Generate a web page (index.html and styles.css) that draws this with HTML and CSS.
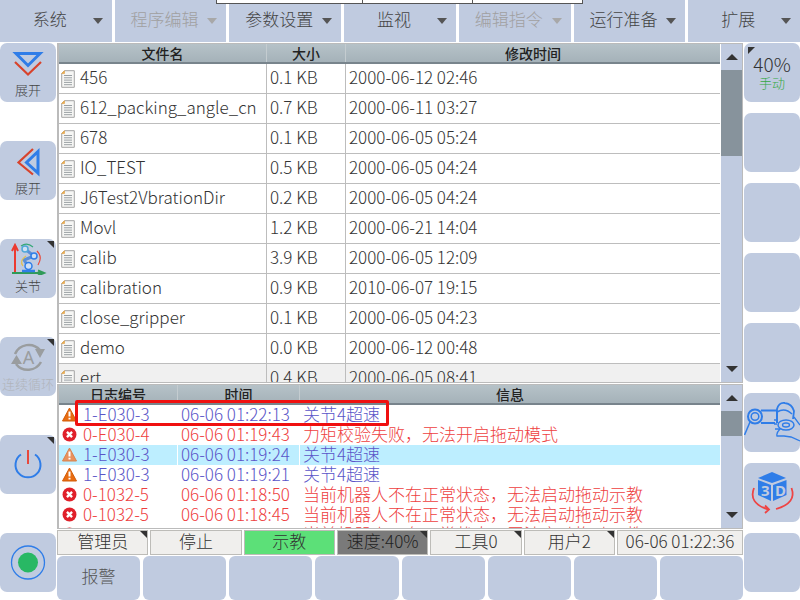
FILE: index.html
```html
<!DOCTYPE html>
<html lang="zh">
<head>
<meta charset="utf-8">
<title>Robot teach pendant</title>
<link rel="stylesheet" href="styles.css">
</head>
<body>
<svg class="defs" width="0" height="0">
  <symbol id="doc" viewBox="0 0 14 18">
    <path d="M3.500 .7H13.300V17.300H.7V3.500Z" fill="#f6f6f4" stroke="#a4a4a4"/>
    <path d="M.7 3.500 3.500 .7V3.500Z" fill="#f0b050" stroke="#e0a040" stroke-width=".6"/>
    <path d="M3 5.500H11M3 7.800H11M3 10.100H11M3 12.400H11M3 14.700H11" stroke="#9aa0a4" stroke-width="1"/>
  </symbol>
  <symbol id="warn" viewBox="0 0 15 15">
    <path d="M7.500 1 14.500 14H.5Z" fill="#e86c10" stroke="#d25c08" stroke-linejoin="round"/>
    <path d="M7.500 4.500V9.600M7.500 10.800V12.600" stroke="#fff" stroke-width="2"/>
  </symbol>
  <symbol id="warn-sel" viewBox="0 0 15 15">
    <path d="M7.500 1 14.500 14H.5Z" fill="#e8915c" stroke="#d9834e" stroke-linejoin="round"/>
    <path d="M7.500 4.500V9.600M7.500 10.800V12.600" stroke="#fff" stroke-width="2"/>
  </symbol>
  <symbol id="err" viewBox="0 0 14 14">
    <circle cx="7" cy="7" r="6.500" fill="#e0202a"/>
    <path d="M4.600 4.600 9.400 9.400M9.400 4.600 4.600 9.400" stroke="#fff" stroke-width="2.200"/>
  </symbol>
</svg>

<div class="app">
  <nav class="menubar">
    <div class="menu"><span>系统</span><i class="caret"></i></div>
    <div class="menu off"><span>程序编辑</span><i class="caret"></i></div>
    <div class="menu"><span>参数设置</span><i class="caret"></i></div>
    <div class="menu"><span>监视</span><i class="caret"></i></div>
    <div class="menu off"><span>编辑指令</span><i class="caret"></i></div>
    <div class="menu"><span>运行准备</span><i class="caret"></i></div>
    <div class="menu"><span>扩展</span><i class="caret"></i></div>
  </nav>

  <div class="main">
    <aside class="side side-left">
      <div class="tool">
        <svg class="ico" viewBox="0 0 56 36"><path d="M16 10.500H40L28 22.500Z" fill="none" stroke="#2f7de8" stroke-width="3"/><path d="M15 19 28 31.500 41 19" fill="none" stroke="#d8432c" stroke-width="2.200"/></svg>
        <span class="tool-label">展开</span>
      </div>
      <div class="tool">
        <svg class="ico" viewBox="0 0 56 36"><path d="M38 10.500V32L26.500 21.500Z" fill="none" stroke="#2f7de8" stroke-width="3"/><path d="M33 8 18.500 21.500 33 33.500" fill="none" stroke="#d8432c" stroke-width="2.200"/></svg>
        <span class="tool-label">展开</span>
      </div>
      <div class="tool mark-tr">
        <svg class="ico" viewBox="0 0 56 36">
          <path d="M15 34V7M12 12 15 6 18 12" fill="none" stroke="#ec3a30" stroke-width="2"/>
          <path d="M12 34H42M38 31.500 44 34 38 36.500" fill="none" stroke="#2f9a58" stroke-width="2"/>
          <path d="M22 32H35" stroke="#2f7de8" stroke-width="2.500"/>
          <path d="M28 27 24 21 34 17 25 10" fill="none" stroke="#5b8fd8" stroke-width="3"/>
          <circle cx="28.500" cy="27" r="3.500" fill="#cfe0f5" stroke="#2f7de8" stroke-width="1.500"/>
          <circle cx="34" cy="17" r="3" fill="#cfe0f5" stroke="#2f7de8" stroke-width="1.500"/>
          <circle cx="25" cy="10" r="3" fill="#cfe0f5" stroke="#4fa8d8" stroke-width="1.500"/>
          <path d="M21 7Q27 3 33 8" fill="none" stroke="#35a878" stroke-width="1.200"/>
          <path d="M37 12Q43 18 38 26" fill="none" stroke="#e84a3c" stroke-width="1.200"/>
          <path d="M23 27Q19 22 26 17" fill="none" stroke="#e0c050" stroke-width="1.200"/>
        </svg>
        <span class="tool-label">关节</span>
      </div>
      <div class="tool mark-tr off">
        <svg class="ico" viewBox="0 0 56 36">
          <path d="M15 17A15 15 0 0 1 40 13M41 25A15 15 0 0 1 16 27" fill="none" stroke="#9a9d9f" stroke-width="2.500"/>
          <path d="M35 12H45L40 21ZM11 27H22L16.500 18Z" fill="#9a9d9f"/>
          <text class="loop-a" x="28.500" y="27" text-anchor="middle">A</text>
        </svg>
        <span class="tool-label tool-label-wide">连续循环</span>
      </div>
      <div class="tool tool-center mark-tr">
        <svg class="ico-full" viewBox="0 0 56 59"><path d="M21 19.500A12.500 12.500 0 1 0 35 19.500" fill="none" stroke="#2f7de8" stroke-width="2"/><path d="M28 15V29" stroke="#e8483c" stroke-width="2"/></svg>
      </div>
      <div class="tool tool-center">
        <svg class="ico-full" viewBox="0 0 56 59"><circle cx="28" cy="29.500" r="16.500" fill="none" stroke="#2f7de8" stroke-width="1.300"/><circle cx="28" cy="29.500" r="10" fill="#28b864"/></svg>
      </div>
    </aside>

    <section class="center">
      <div class="panel file-panel">
        <div class="table">
          <div class="thead file-cols">
            <div class="th">文件名</div><div class="th">大小</div><div class="th">修改时间</div>
          </div>
          <div class="file-row file-cols"><div class="td"><svg class="doc"><use href="#doc"/></svg>456</div><div class="td">0.1 KB</div><div class="td">2000-06-12 02:46</div></div>
          <div class="file-row file-cols"><div class="td"><svg class="doc"><use href="#doc"/></svg>612_packing_angle_cn</div><div class="td">0.7 KB</div><div class="td">2000-06-11 03:27</div></div>
          <div class="file-row file-cols"><div class="td"><svg class="doc"><use href="#doc"/></svg>678</div><div class="td">0.1 KB</div><div class="td">2000-06-05 05:24</div></div>
          <div class="file-row file-cols"><div class="td"><svg class="doc"><use href="#doc"/></svg>IO_TEST</div><div class="td">0.5 KB</div><div class="td">2000-06-05 04:24</div></div>
          <div class="file-row file-cols"><div class="td"><svg class="doc"><use href="#doc"/></svg>J6Test2VbrationDir</div><div class="td">0.2 KB</div><div class="td">2000-06-05 04:24</div></div>
          <div class="file-row file-cols"><div class="td"><svg class="doc"><use href="#doc"/></svg>Movl</div><div class="td">1.2 KB</div><div class="td">2000-06-21 14:04</div></div>
          <div class="file-row file-cols"><div class="td"><svg class="doc"><use href="#doc"/></svg>calib</div><div class="td">3.9 KB</div><div class="td">2000-06-05 12:09</div></div>
          <div class="file-row file-cols"><div class="td"><svg class="doc"><use href="#doc"/></svg>calibration</div><div class="td">0.9 KB</div><div class="td">2010-06-07 19:15</div></div>
          <div class="file-row file-cols"><div class="td"><svg class="doc"><use href="#doc"/></svg>close_gripper</div><div class="td">0.1 KB</div><div class="td">2000-06-05 04:23</div></div>
          <div class="file-row file-cols"><div class="td"><svg class="doc"><use href="#doc"/></svg>demo</div><div class="td">0.0 KB</div><div class="td">2000-06-12 00:48</div></div>
          <div class="file-row file-cols file-row-alt"><div class="td"><svg class="doc"><use href="#doc"/></svg>ert</div><div class="td">0.4 KB</div><div class="td">2000-06-05 08:41</div></div>
        </div>
        <div class="scrollbar">
          <div class="sb-btn"><i class="tri-up"></i></div>
          <div class="sb-thumb file-thumb"></div>
          <div class="sb-track"></div>
          <div class="sb-btn"><i class="tri-down"></i></div>
        </div>
      </div>

      <div class="panel log-panel">
        <div class="table">
          <div class="thead log-cols">
            <div class="th">日志编号</div><div class="th">时间</div><div class="th">信息</div>
          </div>
          <div class="log-row log-cols warn-row"><div class="lc"><svg class="lvl"><use href="#warn"/></svg>1-E030-3</div><div class="lc">06-06 01:22:13</div><div class="lc">关节4超速</div></div>
          <div class="log-row log-cols err-row"><div class="lc"><svg class="lvl"><use href="#err"/></svg>0-E030-4</div><div class="lc">06-06 01:19:43</div><div class="lc">力矩校验失败，无法开启拖动模式</div></div>
          <div class="log-row log-cols warn-row sel-row"><div class="lc"><svg class="lvl"><use href="#warn-sel"/></svg>1-E030-3</div><div class="lc">06-06 01:19:24</div><div class="lc">关节4超速</div></div>
          <div class="log-row log-cols warn-row"><div class="lc"><svg class="lvl"><use href="#warn"/></svg>1-E030-3</div><div class="lc">06-06 01:19:21</div><div class="lc">关节4超速</div></div>
          <div class="log-row log-cols err-row"><div class="lc"><svg class="lvl"><use href="#err"/></svg>0-1032-5</div><div class="lc">06-06 01:18:50</div><div class="lc">当前机器人不在正常状态，无法启动拖动示教</div></div>
          <div class="log-row log-cols err-row"><div class="lc"><svg class="lvl"><use href="#err"/></svg>0-1032-5</div><div class="lc">06-06 01:18:45</div><div class="lc">当前机器人不在正常状态，无法启动拖动示教</div></div>
          <div class="log-row log-cols err-row"><div class="lc"><svg class="lvl"><use href="#err"/></svg>0-1032-5</div><div class="lc">06-06 01:18:40</div><div class="lc">当前机器人不在正常状态，无法启动拖动示教</div></div>
        </div>
        <div class="scrollbar">
          <div class="sb-btn"><i class="tri-up"></i></div>
          <div class="sb-thumb log-thumb"></div>
          <div class="sb-track"></div>
          <div class="sb-btn"><i class="tri-down"></i></div>
        </div>
        <div class="highlight"></div>
      </div>

      <div class="status">
        <div class="st st-a mark-tr-sm">管理员</div>
        <div class="st st-a">停止</div>
        <div class="st st-a st-green">示教</div>
        <div class="st st-a st-dark mark-tr-sm">速度:40%</div>
        <div class="st st-a mark-tr-sm">工具0</div>
        <div class="st st-a mark-tr-sm">用户2</div>
        <div class="st st-time">06-06 01:22:36</div>
      </div>

      <div class="softkeys">
        <div class="key">报警</div>
        <div class="key"></div>
        <div class="key"></div>
        <div class="key"></div>
        <div class="key"></div>
        <div class="key"></div>
        <div class="key"></div>
        <div class="key"></div>
      </div>
    </section>

    <aside class="side side-right">
      <div class="tool speed mark-tl">
        <span class="speed-val">40%</span>
        <span class="speed-mode">手动</span>
      </div>
      <div class="tool"></div>
      <div class="tool"></div>
      <div class="tool"></div>
      <div class="tool"></div>
      <div class="tool tool-center">
        <svg class="ico-full" viewBox="0 0 56 59" fill="none" stroke="#2f7de8">
          <circle cx="11" cy="23.500" r="7" stroke-width="2"/>
          <circle cx="11" cy="23.500" r="3.800" stroke-width="1.500"/>
          <path d="M6 29 .5 42" stroke-width="1.500"/>
          <path d="M17 17.500H33M17 30H31M33 17.500V30" stroke-width="2"/>
          <path d="M33 24V16Q35 9 41 10Q48 11 50 18L49 26" stroke-width="1.800"/>
          <path d="M33 19Q41 14 48 21" stroke-width="1.500"/>
          <ellipse cx="42" cy="32" rx="8" ry="5" stroke-width="1.500"/>
          <ellipse cx="42" cy="32" rx="3.500" ry="2" stroke-width="1.300"/>
          <path d="M50 24 56 32M33 31H30M31 36H36Q32 40 33 43H40L47 44 56 48M34 27H30" stroke-width="1.300"/>
        </svg>
      </div>
      <div class="tool tool-center">
        <svg class="ico-full" viewBox="0 0 56 59">
          <path d="M28 9 42 15 28 20 14 15Z" fill="#2f7de8"/>
          <path d="M14 17 27 22V38L14 32Z" fill="#2f7de8"/>
          <path d="M42.500 17 29 22V38L42.500 32Z" fill="#2f7de8"/>
          <text class="cube-t" x="17" y="33">3</text>
          <text class="cube-t" x="31" y="33">D</text>
          <path d="M10 25Q4 40 24 46.500M21 42.500 25 46.500 21 50" fill="none" stroke="#ee4444" stroke-width="1.800"/>
          <path d="M47.500 25Q53 40 32 46" fill="none" stroke="#ee4444" stroke-width="1.800"/>
        </svg>
      </div>
      <div class="tool"></div>
    </aside>
  </div>

  <div class="popup-edge"><div class="popup-cell popup-a"></div><div class="popup-cell popup-b"></div></div>
</div>
</body>
</html>
```

FILE: styles.css
```css
* { box-sizing: border-box; }
html, body { margin: 0; padding: 0; background: #fff; }
body { font-family: "Noto Sans CJK SC", "Noto Sans", sans-serif; color: #333; }
.defs { display: block; position: absolute; }
.app { position: relative; width: 800px; height: 600px; overflow: hidden; display: flex; flex-direction: column; }

/* menu bar */
.menubar { display: flex; gap: 3px; height: 42px; margin-bottom: 1px; flex: none; }
.menu { flex: 1 1 0; background: #c0cbe0; display: flex; align-items: center; position: relative; justify-content: center; padding: 0 12px 4px 0; font-size: 17px; line-height: 24px; font-weight: 300; color: #444; }
.menu.off { color: #a0a0a0; }
.caret { position: absolute; right: 9px; top: 18px; width: 0; height: 0; border-left: 5px solid transparent; border-right: 5px solid transparent; border-top: 6px solid #555; }
.menu.off .caret { border-top-color: #a8a8a8; }

.main { flex: 1; display: flex; min-height: 0; }

/* side columns */
.side { width: 56px; flex: none; display: flex; flex-direction: column; }
.side-left { gap: 39px; margin-right: 1px; }
.side-right { gap: 11px; margin-left: 1px; }
.tool { height: 59px; flex: none; background: #c0cbe0; border-radius: 7px; position: relative; display: flex; flex-direction: column; align-items: center; overflow: hidden; }
.tool-center { justify-content: center; }
.ico { width: 56px; height: 36px; flex: none; display: block; }
.ico-full { width: 56px; height: 59px; display: block; }
.tool-label { font-size: 13px; line-height: 16px; color: #444; margin-top: 3px; font-weight: 300; }
.tool.off .tool-label { color: #b0b4ba; }
.tool-label-wide { white-space: nowrap; }
.loop-a { font: 18px "Noto Sans", sans-serif; fill: #9a9d9f; }
.cube-t { font: 700 15px "Noto Sans", sans-serif; fill: #c0cbe0; }
.mark-tr::after { content: ""; position: absolute; top: 2px; right: 2px; border-top: 7px solid #333; border-left: 7px solid transparent; }
.mark-tl::before { content: ""; position: absolute; top: 4px; left: 4px; border-top: 7px solid #333; border-right: 7px solid transparent; }
.speed-val { font-size: 19px; line-height: 24px; margin-top: 9px; color: #333; font-weight: 300; }
.speed-mode { font-size: 13px; line-height: 13px; color: #35a845; font-weight: 300; }

/* centre */
.center { width: 686px; flex: none; display: flex; flex-direction: column; }
.panel { display: flex; position: relative; border: 1px solid #bbb; border-left-width: 2px; background: #fff; }
.file-panel { height: 340px; overflow: hidden; }
.log-panel { height: 145px; margin-top: 1px; }
.table { flex: 1; min-width: 0; overflow: hidden; }
.thead { height: 20px; background: linear-gradient(#b6c2c8, #a5b2b9); border-bottom: 2px solid #78848c; color: #222; font-size: 14px; font-weight: 500; }
.th { display: flex; align-items: center; justify-content: center; line-height: 18px; border-right: 1px solid #c4ccd0; }
.th:last-child { border-right: 0; }
.file-cols { display: grid; grid-template-columns: 208px 79px 1fr; }
.log-cols { display: grid; grid-template-columns: 119px 122px 1fr; }
.file-row { height: 30px; border-bottom: 1px solid #bdbdbd; font-size: 17px; line-height: 22px; background: #fff; }
.file-row-alt { background: #f0f0f0; }
.td { display: flex; align-items: center; padding: 0 0 3px 3px; border-right: 1px solid #bdbdbd; white-space: nowrap; overflow: hidden; color: #333; font-weight: 300; }
.td:first-child { padding-left: 2px; }
.td:last-child { border-right: 0; }
.doc { width: 14px; height: 18px; margin: 3px 5px 0 0; flex: none; }

.log-row { height: 20px; font-size: 17px; line-height: 18px; }
.lc { display: flex; align-items: center; white-space: nowrap; padding: 0 0 2px 3px; font-weight: 300; }
.lvl { width: 15px; height: 15px; margin: 1px 6px 0 0; flex: none; }
.warn-row { color: #5a55c8; }
.err-row { color: #ee4040; }
.sel-row .lc { background: #bdeeff; border-right: 1px solid #fff; }
.sel-row .lc:last-child { border-right: 0; }

/* scrollbar */
.scrollbar { width: 21px; flex: none; margin-left: 1px; background: #c0cbe0; display: flex; flex-direction: column; }
.sb-btn { height: 26px; flex: none; display: flex; align-items: center; justify-content: center; }
.sb-thumb { background: #87939c; flex: none; }
.file-thumb { height: 86px; }
.log-thumb { height: 25px; }
.sb-track { flex: 1; }
.tri-up { width: 0; height: 0; border-left: 6px solid transparent; border-right: 6px solid transparent; border-bottom: 6px solid #333; }
.tri-down { width: 0; height: 0; border-left: 6px solid transparent; border-right: 6px solid transparent; border-top: 6px solid #333; }
.highlight { position: absolute; left: 16px; top: 15px; width: 314px; height: 26px; border: 3px solid #f01010; border-radius: 2px; pointer-events: none; }

/* status bar */
.status { display: flex; gap: 2px; height: 25px; margin-top: 1px; flex: none; }
.st { background: #f0efed; border: 1px solid #bdbcb8; display: flex; align-items: center; justify-content: center; padding-bottom: 3px; font-size: 17px; line-height: 20px; color: #333; position: relative; font-weight: 300; white-space: nowrap; }
.st-a { flex: 1 1 0; min-width: 0; }
.st-time { width: 126px; flex: none; }
.st-green { background: #5ce078; }
.st-dark { background: #7a7a7a; color: #222; }
.mark-tr-sm::after { content: ""; position: absolute; top: 0; right: 0; border-top: 7px solid #333; border-left: 7px solid transparent; }

.softkeys { display: flex; gap: 3px; margin-top: 1px; flex: 1; min-height: 0; }
.key { flex: 1 1 0; background: #c0cbe0; border-radius: 6px; display: flex; align-items: center; justify-content: center; padding-bottom: 4px; color: #555; font-size: 17px; line-height: 24px; font-weight: 300; }

/* dialog edge at the top */
.popup-edge { position: absolute; left: 216px; top: -2px; width: 367px; height: 6px; background: #fff; border: 1px solid #555; display: flex; }
.popup-cell { border-right: 1px solid #555; }
.popup-a { width: 146px; }
.popup-b { width: 110px; }
```
